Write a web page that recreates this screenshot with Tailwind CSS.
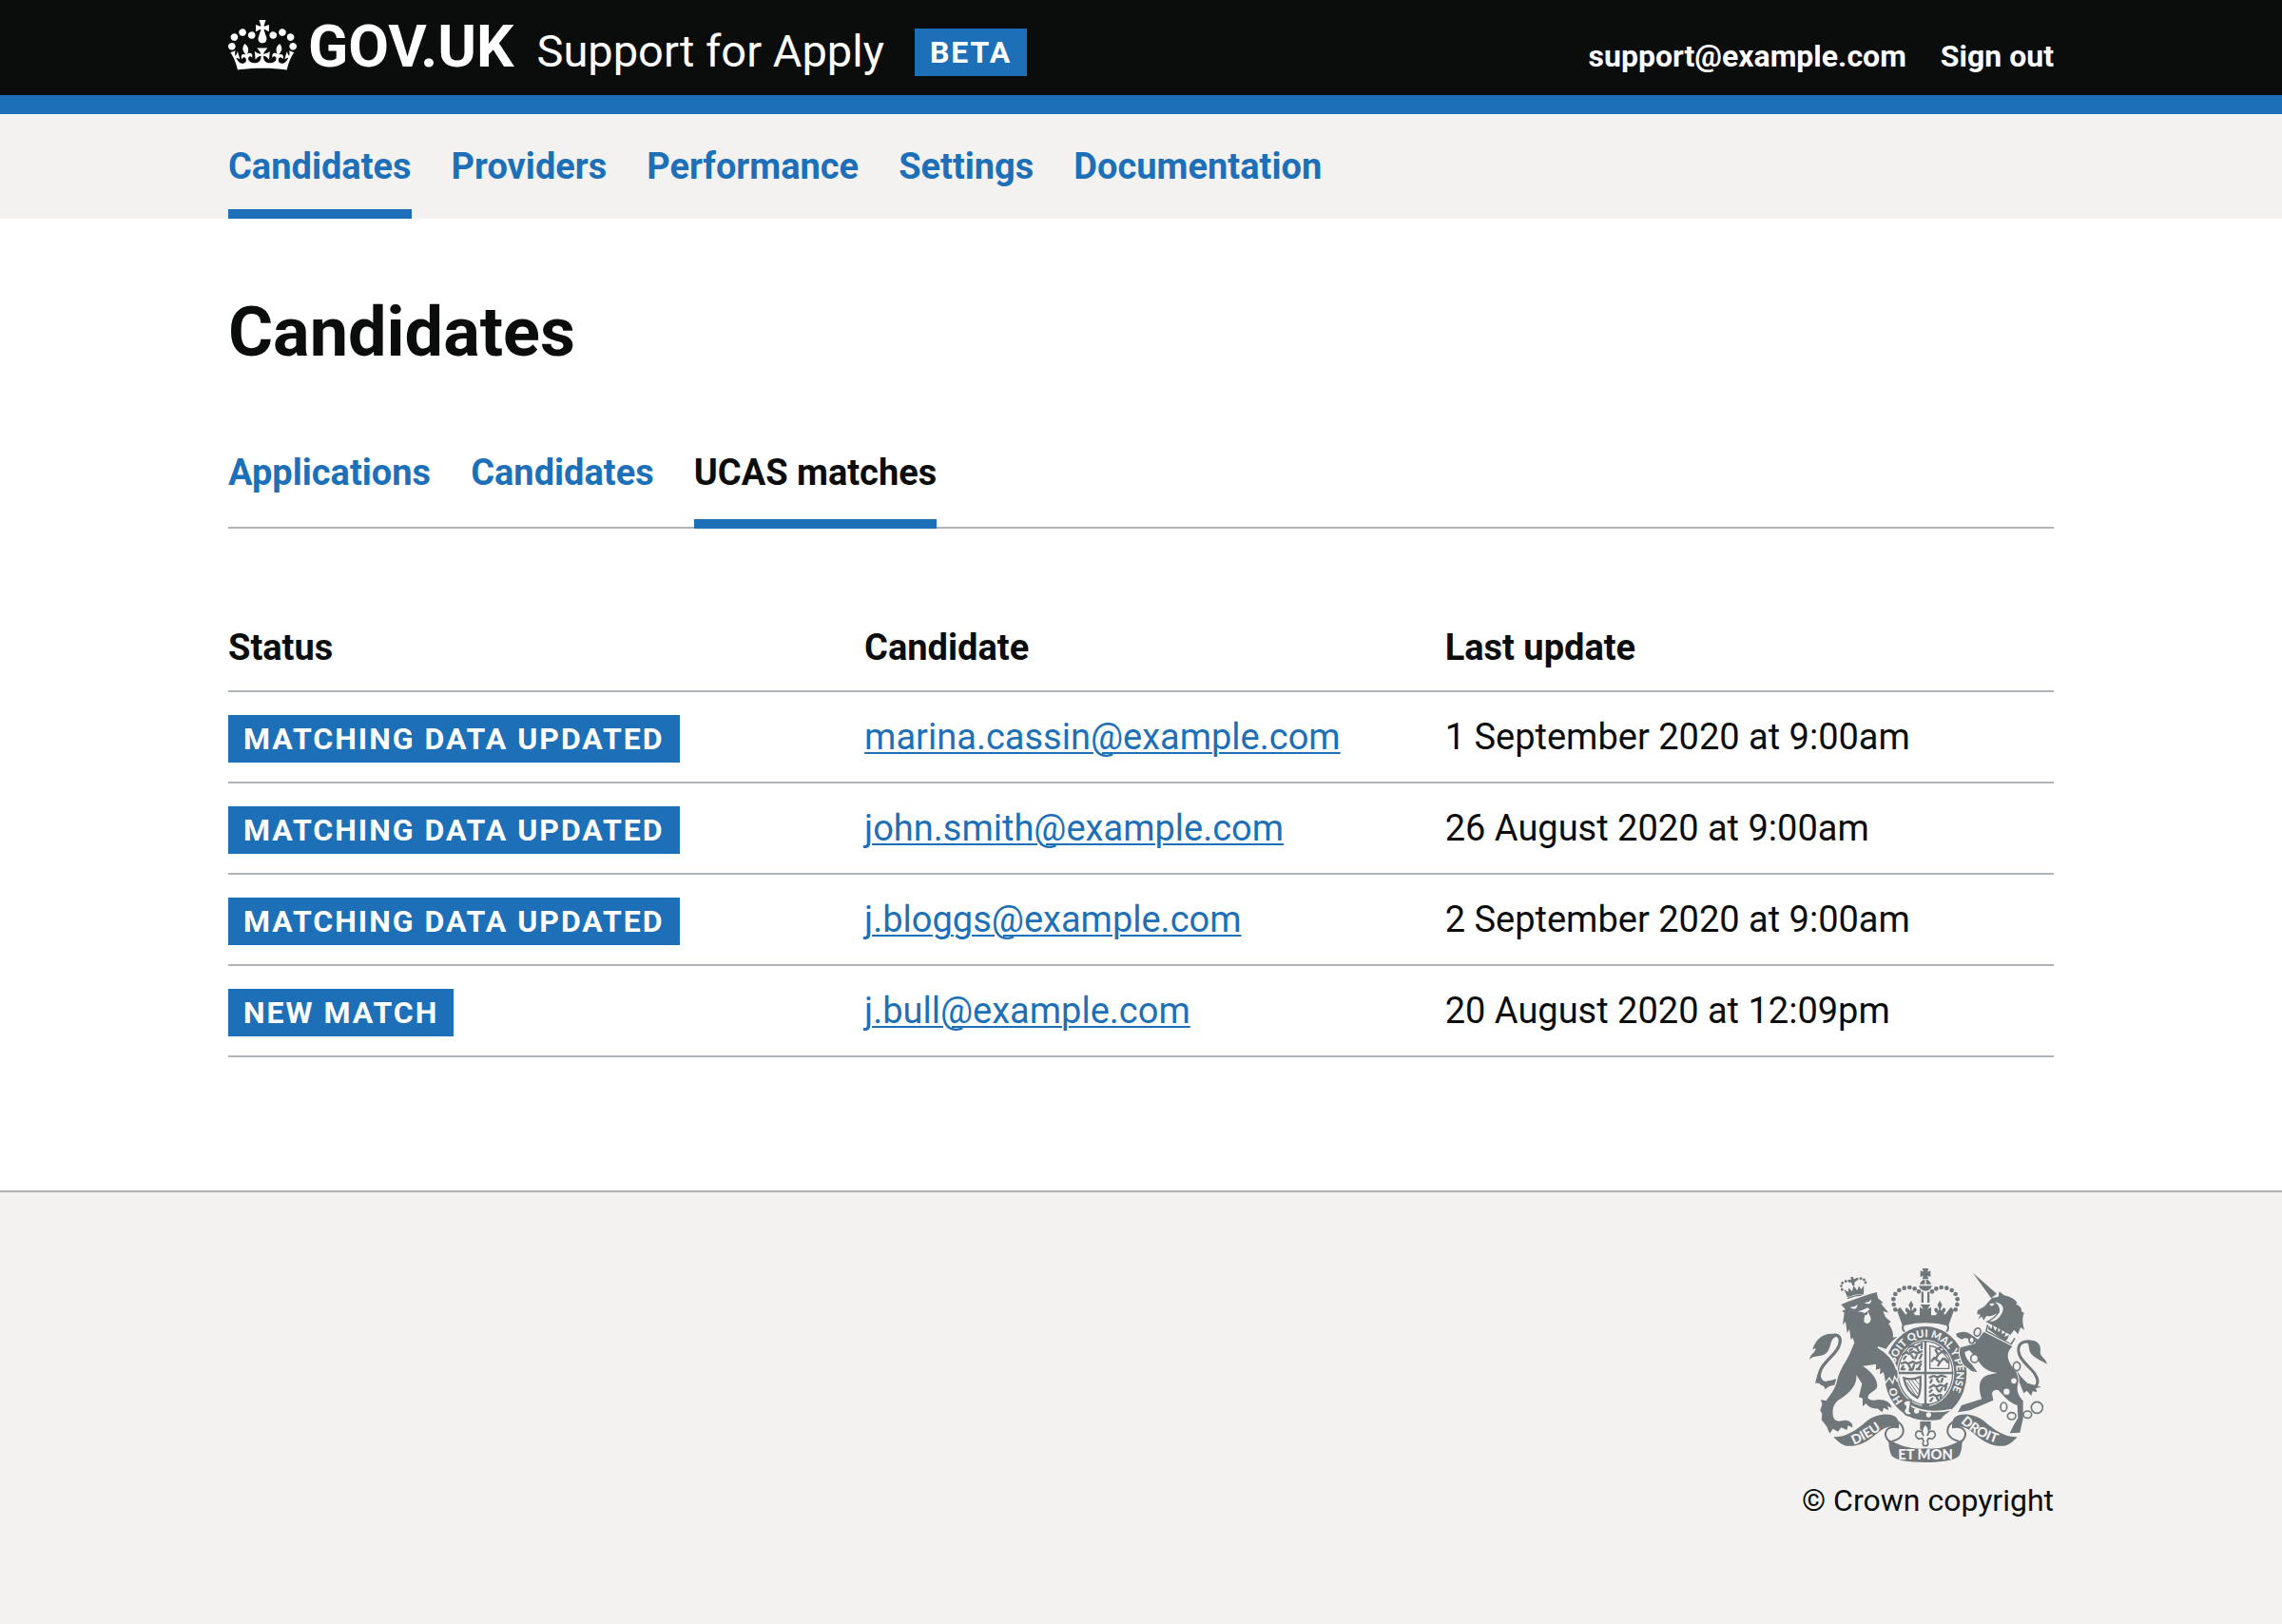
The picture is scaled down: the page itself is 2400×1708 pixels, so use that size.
<!DOCTYPE html>
<html lang="en">
<head>
<meta charset="utf-8">
<meta name="viewport" content="width=device-width, initial-scale=1">
<title>Candidates - Support for Apply</title>
<script src="https://cdn.jsdelivr.net/npm/@tailwindcss/browser@4"></script>
</head>
<body class="flex min-h-screen flex-col bg-white font-[Roboto,Arial,sans-serif] text-[38px] leading-[50px] text-[#0b0c0c]">

<header class="border-b-20 border-[#1d70b8] bg-[#0b0c0c] text-white">
  <div class="mx-auto flex h-25 max-w-[1920px] items-baseline justify-between pt-5">
    <div class="flex items-baseline">
      <a href="#" class="flex items-baseline gap-3 text-[62px] leading-[58px] font-bold">
        <svg class="mt-px h-[53px] w-18 self-start" viewBox="0 0 132 97" fill="currentColor" aria-hidden="true">
          <path d="M25 30.2c3.5 1.5 7.7-.2 9.1-3.7 1.5-3.6-.2-7.8-3.9-9.2-3.6-1.4-7.6.3-9.1 3.9-1.4 3.5.3 7.5 3.9 9zM9 39.5c3.6 1.5 7.8-.2 9.2-3.7 1.5-3.6-.2-7.8-3.9-9.1-3.6-1.5-7.6.2-9.1 3.8-1.4 3.5.3 7.5 3.8 9zM4.4 57.2c3.5 1.5 7.7-.2 9.1-3.8 1.5-3.6-.2-7.7-3.9-9.1-3.5-1.5-7.6.3-9.1 3.8-1.4 3.5.3 7.6 3.9 9.1zm38.3-21.4c3.5 1.5 7.7-.2 9.1-3.8 1.5-3.6-.2-7.7-3.9-9.1-3.6-1.5-7.6.3-9.1 3.8-1.3 3.6.4 7.7 3.9 9.1zm64.4-5.6c-3.6 1.5-7.8-.2-9.1-3.7-1.5-3.6.2-7.8 3.8-9.2 3.6-1.4 7.7.3 9.2 3.9 1.3 3.5-.4 7.5-3.9 9zm15.9 9.3c-3.6 1.5-7.7-.2-9.1-3.7-1.5-3.6.2-7.8 3.7-9.1 3.6-1.5 7.7.2 9.2 3.8 1.5 3.5-.3 7.5-3.8 9zm4.7 17.7c-3.6 1.5-7.8-.2-9.2-3.8-1.5-3.6.2-7.7 3.9-9.1 3.6-1.5 7.7.3 9.2 3.8 1.3 3.5-.4 7.6-3.9 9.1zM89.3 35.8c-3.6 1.5-7.8-.2-9.2-3.8-1.4-3.6.2-7.7 3.9-9.1 3.6-1.5 7.7.3 9.2 3.8 1.4 3.6-.3 7.7-3.9 9.1zM69.7 17.7l8.9 4.7V9.3l-8.9 2.8c-.2-.3-.5-.6-.9-.9L72.4 0H59.6l3.5 11.2c-.3.3-.6.5-.9.9l-8.8-2.8v13.1l8.8-4.7c.3.3.6.7.9.9l-5 15.4v.1c-.2.8-.4 1.6-.4 2.4 0 4.1 3.1 7.5 7 8.1h.2c.3 0 .7.1 1 .1.4 0 .7 0 1-.1h.2c4-.6 7.1-4.1 7.1-8.1 0-.8-.1-1.7-.4-2.4V34l-5.1-15.4c.4-.2.7-.6 1-.9zM66 92.8c16.9 0 32.8 1.1 47.1 3.2 4-16.9 8.9-26.7 14-33.5l-9.6-3.4c1 4.9 1.1 7.2 0 10.2-1.5-1.4-3-4.3-4.2-8.7L108.6 76c2.8-2 5-3.2 7.5-3.3-4.4 9.4-10 11.9-13.6 11.2-4.3-.8-6.3-4.6-5.6-7.9 1-4.7 5.7-5.9 8-.5 4.3-8.7-3-11.4-7.6-8.8 7.1-7.2 7.9-13.5 2.1-21.1-8 6.1-8.1 12.3-4.5 20.8-4.7-5.4-12.1-2.5-9.5 6.2 3.4-5.2 7.9-2 7.2 3.1-.6 4.3-6.4 7.8-13.5 7.2-10.3-.9-10.9-8-11.2-13.8 2.5-.5 7.1 1.8 11 7.3L80.2 60c-4.1 4.4-8 5.3-12.3 5.4 1.4-4.4 8-11.6 8-11.6H55.5s6.4 7.2 7.9 11.6c-4.2-.1-8-1-12.3-5.4l1.4 16.4c3.9-5.5 8.5-7.7 10.9-7.3-.3 5.8-.9 12.8-11.1 13.8-7.2.6-12.9-2.9-13.5-7.2-.7-5 3.8-8.3 7.1-3.1 2.7-8.7-4.6-11.6-9.4-6.2 3.7-8.5 3.6-14.7-4.6-20.8-5.8 7.6-5 13.9 2.2 21.1-4.7-2.6-11.9.1-7.7 8.8 2.3-5.5 7.1-4.2 8.1.5.7 3.3-1.3 7.1-5.7 7.9-3.5.7-9-1.8-13.5-11.2 2.5.1 4.7 1.3 7.5 3.3l-4.7-15.4c-1.2 4.4-2.7 7.2-4.3 8.7-1.1-3-.9-5.3 0-10.2l-9.5 3.4c5 6.9 9.9 16.7 14 33.5 14.8-2.1 30.8-3.2 47.7-3.2z"/>
        </svg>
        <span>GOV.UK</span>
      </a>
      <a href="#" class="ml-6 text-[47px]">Support for Apply</a>
      <strong class="mt-2.5 ml-8 self-start bg-[#1d70b8] px-4 text-[32px] font-bold tracking-[2px]">BETA</strong>
    </div>
    <nav aria-label="Account" class="flex items-baseline gap-9 text-[32px] font-bold">
      <a href="#">support@example.com</a>
      <a href="#">Sign out</a>
    </nav>
  </div>
</header>

<nav aria-label="Primary" class="bg-[#f3f2f1]">
  <div class="mx-auto flex max-w-[1920px] gap-10.5 font-bold text-[#1d70b8]">
    <a href="#" aria-current="page" class="border-b-10 border-[#1d70b8] pt-7.5 pb-5">Candidates</a>
    <a href="#" class="border-b-10 border-transparent pt-7.5 pb-5">Providers</a>
    <a href="#" class="border-b-10 border-transparent pt-7.5 pb-5">Performance</a>
    <a href="#" class="border-b-10 border-transparent pt-7.5 pb-5">Settings</a>
    <a href="#" class="border-b-10 border-transparent pt-7.5 pb-5">Documentation</a>
  </div>
</nav>

<main class="mx-auto w-full max-w-[1920px] pt-20 pb-35">
  <h1 class="mb-20.5 text-[72px] leading-[80px] font-bold">Candidates</h1>

  <nav aria-label="Candidate views" class="mb-25 flex gap-10.5 border-b-2 border-[#b1b4b6] font-bold text-[#1d70b8]">
    <a href="#" class="-mb-0.5 border-b-10 border-transparent pb-6">Applications</a>
    <a href="#" class="-mb-0.5 border-b-10 border-transparent pb-6">Candidates</a>
    <a href="#" aria-current="page" class="-mb-0.5 border-b-10 border-[#1d70b8] pb-6 text-[#0b0c0c]">UCAS matches</a>
  </nav>

  <table class="w-full table-fixed border-separate border-spacing-0 text-left">
    <colgroup>
      <col class="w-[34.85%]">
      <col class="w-[31.8%]">
      <col>
    </colgroup>
    <thead>
      <tr>
        <th scope="col" class="border-b-2 border-[#b1b4b6] pb-5 font-bold">Status</th>
        <th scope="col" class="border-b-2 border-[#b1b4b6] pb-5 font-bold">Candidate</th>
        <th scope="col" class="border-b-2 border-[#b1b4b6] pb-5 font-bold">Last update</th>
      </tr>
    </thead>
    <tbody class="align-top">
      <tr>
        <td class="border-b-2 border-[#b1b4b6] pt-6 pb-5"><strong class="block w-fit bg-[#1d70b8] px-4 text-[32px] font-bold tracking-[2px] text-white">MATCHING DATA UPDATED</strong></td>
        <td class="border-b-2 border-[#b1b4b6] pt-5.5"><a href="#" class="text-[#1d70b8] underline decoration-2 underline-offset-3">marina.cassin@example.com</a></td>
        <td class="border-b-2 border-[#b1b4b6] pt-5.5">1 September 2020 at 9:00am</td>
      </tr>
      <tr>
        <td class="border-b-2 border-[#b1b4b6] pt-6 pb-5"><strong class="block w-fit bg-[#1d70b8] px-4 text-[32px] font-bold tracking-[2px] text-white">MATCHING DATA UPDATED</strong></td>
        <td class="border-b-2 border-[#b1b4b6] pt-5.5"><a href="#" class="text-[#1d70b8] underline decoration-2 underline-offset-3">john.smith@example.com</a></td>
        <td class="border-b-2 border-[#b1b4b6] pt-5.5">26 August 2020 at 9:00am</td>
      </tr>
      <tr>
        <td class="border-b-2 border-[#b1b4b6] pt-6 pb-5"><strong class="block w-fit bg-[#1d70b8] px-4 text-[32px] font-bold tracking-[2px] text-white">MATCHING DATA UPDATED</strong></td>
        <td class="border-b-2 border-[#b1b4b6] pt-5.5"><a href="#" class="text-[#1d70b8] underline decoration-2 underline-offset-3">j.bloggs@example.com</a></td>
        <td class="border-b-2 border-[#b1b4b6] pt-5.5">2 September 2020 at 9:00am</td>
      </tr>
      <tr>
        <td class="border-b-2 border-[#b1b4b6] pt-6 pb-5"><strong class="block w-fit bg-[#1d70b8] px-4 text-[32px] font-bold tracking-[2px] text-white">NEW MATCH</strong></td>
        <td class="border-b-2 border-[#b1b4b6] pt-5.5"><a href="#" class="text-[#1d70b8] underline decoration-2 underline-offset-3">j.bull@example.com</a></td>
        <td class="border-b-2 border-[#b1b4b6] pt-5.5">20 August 2020 at 12:09pm</td>
      </tr>
    </tbody>
  </table>
</main>

<footer class="grow border-t-2 border-[#b1b4b6] bg-[#f3f2f1]">
  <div class="mx-auto flex max-w-[1920px] justify-end pt-20 pb-25">
    <a href="#" class="flex flex-col items-center gap-5 text-[32px] leading-10">
      <svg class="h-51 w-[250px]" viewBox="72 72 750 612" fill="#6f777b" aria-hidden="true">
        <defs>
          <path id="motto" d="M340 402A98 113 0 0 1 536 402A98 113 0 0 1 438 515"/>
          <path id="motto-start" d="M376 500A98 113 0 0 1 340 402"/>
          <path id="dieu" d="M212 629Q262 610 326 558"/>
          <path id="droit" d="M549 558Q600 608 682 629"/>
          <g id="half-crown">
            <circle cx="343" cy="202" r="7"/><circle cx="338" cy="186" r="7"/><circle cx="337" cy="169" r="7"/><circle cx="343" cy="153" r="7"/><circle cx="355" cy="141" r="7"/><circle cx="371" cy="134" r="7"/><circle cx="388" cy="132" r="7"/><circle cx="404" cy="136" r="7"/><circle cx="417" cy="145" r="7"/>
            <path d="M439 220h-33l-6-8c12 0 14-18 2-15l-6 9c-5-10 8-16 2-22l-5-10-6 10c-6 6 7 12 2 22l-7-9c-10-3-10 11-1 15l-5 6-18-24-10 10 18 50c24-10 48-13 73-13z"/>
          </g>
          <g id="half-ribbon">
            <path d="M148 604C190 604 220 582 252 554C284 530 326 526 346 542Q356 552 354 574C310 562 296 588 262 611C230 634 196 636 180 629Q166 624 148 604Z"/>
            <path d="M354 574C318 566 296 592 326 620M352 556C378 578 374 606 332 618" fill="none" stroke="#6f777b" stroke-width="6"/>
          </g>
        </defs>

        <!-- Lion's crown -->
        <g transform="rotate(-11 214 140)">
          <path d="M188 158l-6-26 11 10 5-12 8 13 8-17 8 17 8-13 5 12 11-10-6 26q-26-6-52 0z"/>
          <path d="M187 162q27-6 54 0" fill="none" stroke="#6f777b" stroke-width="4"/>
          <path d="M176 132q-4-22 14-24 18-2 24 10 6-12 24-10 18 2 14 24" fill="none" stroke="#6f777b" stroke-width="8" stroke-linecap="round" stroke-dasharray="1 10"/>
          <path d="M210 98h8v8h8v8h-8v12h-8v-12h-8v-8h8z"/>
        </g>

        <!-- Royal crown -->
        <path d="M428 72h20l-4 11 10-4v20l-10-4 4 11h-20l4-11-10 4v-20l10 4z"/>
        <path d="M420 122q4-14 16-15v15zM440 107q12 1 16 15h-16zM417 127h42q-6 16-21 16t-21-16z"/>
        <path d="M425 146h7v34h-7zM444 146h7v34h-7zM422 186h32l-10 14 12-6v28h-36v-28l12 6z"/>
        <use href="#half-crown"/>
        <use href="#half-crown" transform="matrix(-1 0 0 1 876 0)"/>
        <path d="M372 246q-12 14 0 26M504 246q12 14 0 26M374 248q64-14 128 0" fill="none" stroke="#6f777b" stroke-width="6"/>

        <!-- Garter and shield -->
        <ellipse cx="438" cy="403" rx="130" ry="148"/>
        <ellipse cx="438" cy="402" rx="91" ry="105" fill="#f3f2f1"/>
        <ellipse cx="438" cy="402" rx="86" ry="100" fill="none" stroke="#6f777b" stroke-width="4"/>
        <path d="M438 300V504M350 402H526" fill="none" stroke="#6f777b" stroke-width="7"/>
        <g fill="none" stroke="#6f777b" stroke-width="7" stroke-linecap="round" stroke-linejoin="round">
          <path d="M366 344l12-8 8 6 14-8 12 6 14-6M376 350l-6 8M394 346l6 9M410 346l-4 10M426 344l-6 12M386 320l10-4 10 5 14-8M396 326l-8 6M412 324l4 8M426 308v16M362 372l12-4 10 5 14-7 12 6 14-6M368 380l-6 10M386 378l6 12M402 376l-4 14M424 374l-8 14M364 390h8M388 392h8M410 390h10"/>
          <path d="M452 448l12-8 8 6 14-6 12 4 8-8M458 456l-6 6M474 452l6 8M490 450l-6 10M504 444l-4 12M452 416l12-5 12 5 12-6 14 4M458 424l-4 8M474 422l6 8M492 420l-4 10M452 474l10-4 10 5 12-4M460 482l-6 8M474 480l4 6M488 472l-2 8"/>
          <path d="M470 330l8 14 16-12 10 8M478 344l-8 14 14 10 10-12 12 8M466 354l-8 10M484 368l-6 10M474 326l12-4M500 358l8 10"/>
        </g>
        <path d="M452 316Q486 320 512 362V388H452Z" fill="none" stroke="#6f777b" stroke-width="4"/>
        <path d="M370 418Q378 462 412 480Q424 470 422 414Q396 426 370 418Z" fill="none" stroke="#6f777b" stroke-width="7"/>
        <path d="M384 424L414 468M394 424L418 456M404 422L420 440M380 432L408 474" stroke="#6f777b" stroke-width="3"/>
        <path d="M428 498h22v14h-22z"/>
        <text fill="#f3f2f1" font-family="Lato, sans-serif" font-weight="900" font-size="33"><textPath href="#motto-start" startOffset="12">HO</textPath><textPath href="#motto" startOffset="30">SOIT QUI MAL Y PENSE</textPath></text>
        <!-- Garter buckle -->
        <path d="M366 492Q430 530 518 510L486 548Q430 560 372 530Z"/>
        <path d="M388 504Q440 534 520 518" fill="none" stroke="#f3f2f1" stroke-width="5"/>
        <circle cx="410" cy="522" r="8" fill="#f3f2f1"/><circle cx="448" cy="534" r="8" fill="#f3f2f1"/>
        <path d="M392 488q-24-4-24 14 10 4 6 12-10 10 4 20 12 4 18-4l-8-8 4-22z" fill="#f3f2f1" stroke="#6f777b" stroke-width="6"/>

        <!-- Lion -->
        <path d="M150 282C180 282 170 318 150 340C126 366 98 390 104 418C110 440 140 436 160 424" fill="none" stroke="#6f777b" stroke-width="10"/>
        <path d="M154 279C112 272 90 300 82 328L92 324C92 338 74 342 72 360C86 344 108 354 124 340C142 326 134 298 154 288Z"/>
        <path d="M98 404L90 434Q104 432 108 440Q120 442 122 454Q130 442 152 440L164 420L118 430Z"/>
        <path stroke="#f3f2f1" stroke-width="8" paint-order="stroke" d="M172 186L195 176L262 153L284 147L288 166L305 181L297 182L322 212L304 207L312 226L329 241L322 246Q338 270 336 290L349 288Q326 306 314 326L288 318Q334 346 344 384Q354 404 348 422L340 408L334 430L324 414L312 430L306 400L294 406L296 388L282 392L282 374L240 380C262 392 288 420 286 444C284 460 258 462 256 480Q264 492 290 486Q326 486 332 512L318 507L322 520L306 512L302 526L286 514Q262 516 250 498L240 508L240 482L228 478L238 436L220 408C224 440 198 466 172 482C150 494 144 510 146 534C148 552 160 556 174 553C196 546 210 560 208 574L194 568L190 582L172 574L162 587L146 578L136 593L126 570L110 550L112 532L106 520L112 502L108 486L124 490C142 468 156 446 160 424C166 394 186 368 198 344L214 306L208 290L203 298L198 264L191 276L186 240L177 250L182 212L175 206L186 202Z"/>
        <g fill="#f3f2f1">
          <path d="M200 194q12 2 24-8-2 14-10 14-8 0-14-6zM244 180q12 2 24-10-2 14-10 14-8 0-14-4z"/>
          <path d="M224 208l14-4 18-8 6 6-6 4 6 14q8 16-2 24-8 6-16-4 0-14 4-22l-8-8z"/>
        </g>
        <path d="M232 210l12 4 14-8-4 12-12 2z"/>
        <path d="M288 320Q336 348 348 392" fill="none" stroke="#f3f2f1" stroke-width="5"/>

        <!-- Unicorn -->
        <path d="M588 86L663 152L645 166Z"/>
        <path d="M770 304C736 298 724 320 736 348C750 378 792 398 792 430C790 450 768 452 750 438L722 396" fill="none" stroke="#6f777b" stroke-width="9"/>
        <path d="M752 300C786 294 806 308 800 338C804 354 820 358 822 374C802 362 778 354 768 336C762 320 768 310 752 300Z"/>
        <path d="M722 396L736 436L748 466L758 458L772 474L776 460L790 462L786 450L804 446L760 434Z"/>
        <path d="M648 165L668 162L671 145L686 157Q716 162 728 182L722 184Q744 194 741 208L749 212Q740 234 750 266L738 258L730 280L718 266L706 282L628 240Q650 232 664 214Q644 226 630 222L622 236L616 224L604 232L612 218L601 216L603 204L624 192Z"/>
        <path d="M640 184q10-4 16 0-4 8-12 6zM658 178Q692 186 680 212Q666 240 640 240Q676 216 672 200Q670 188 658 178Z" fill="#f3f2f1"/>
        <path d="M634 250L630 270L708 312L720 292" fill="none" stroke="#6f777b" stroke-width="5"/>
        <path d="M636 264l2-12 8 12 4-14 8 20 8-14 2 18 10-12 2 18 12-8-4 16 14-6-6 14-8 6z"/>
        <path stroke="#f3f2f1" stroke-width="6" paint-order="stroke" d="M622 272L712 318C690 340 696 362 716 388Q738 412 728 446Q726 470 746 490L746 546L736 590L704 592L716 568L730 544L728 504C700 494 688 478 668 456Q652 452 648 466L652 488L578 520L540 526L552 504L616 484C606 456 602 418 636 408L664 402Q618 396 600 354L576 330L562 336Q564 358 584 374L602 400L584 396L558 376Q540 344 548 322L594 310Z"/>
        <path d="M602 306L580 300Q570 286 552 296L538 288L534 278Q560 266 578 278L606 298Z"/>
        <g fill="#f3f2f1" stroke="#6f777b" stroke-width="5">
          <ellipse cx="602" cy="273" rx="10" ry="13" transform="rotate(20 602 273)"/><ellipse cx="584" cy="298" rx="8" ry="10"/><ellipse cx="593" cy="356" rx="12" ry="13"/><ellipse cx="726" cy="381" rx="11" ry="14"/><circle cx="717" cy="427" r="11"/><circle cx="694" cy="461" r="12"/><ellipse cx="685" cy="509" rx="10" ry="14"/><ellipse cx="710" cy="538" rx="13" ry="11"/><ellipse cx="760" cy="533" rx="13" ry="11"/><circle cx="790" cy="511" r="18"/>
        </g>

        <!-- Ribbon -->
        <use href="#half-ribbon"/>
        <use href="#half-ribbon" transform="matrix(-1 0 0 1 876 0)"/>
        <path d="M322 612Q380 646 438 640Q496 646 554 612Q554 648 544 664Q524 684 438 684Q352 684 332 664Q322 648 322 612Z"/>
        <g fill="#f3f2f1" font-family="Lato, sans-serif" font-weight="900">
          <text font-size="42"><textPath href="#dieu">DIEU</textPath></text>
          <text font-size="42"><textPath href="#droit">DROIT</textPath></text>
          <text x="438" y="676" font-size="44" text-anchor="middle">ET MON</text>
        </g>
        <!-- Fleur-de-lis -->
        <path d="M421 555h34v26h-34z"/>
        <path d="M438 562q18 20 6 38 4-18 20-14 12 12-4 24l-12-2-4 8q6 16-6 16t-6-16l-4-8-12 2q-16-12-4-24 16-4 20 14-12-18 6-38z" fill="#f3f2f1" stroke="#6f777b" stroke-width="5"/>
      </svg>
      <span>© Crown copyright</span>
    </a>
  </div>
</footer>
</body>
</html>
